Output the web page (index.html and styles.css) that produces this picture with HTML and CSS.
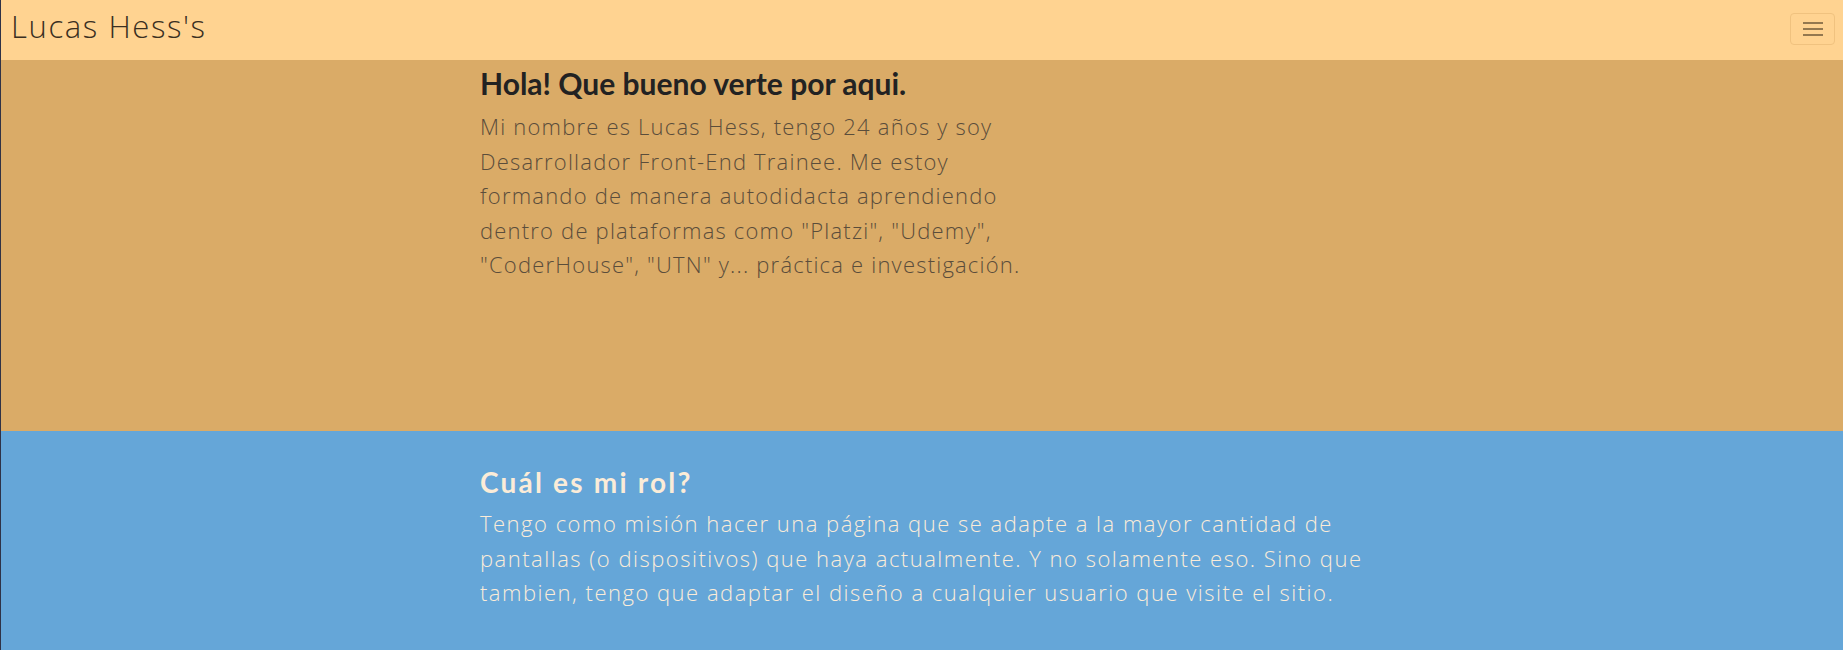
FILE: index.html
```html
<!DOCTYPE html>
<html lang="es">
<head>
<meta charset="utf-8">
<title>Lucas Hess's</title>
<link rel="stylesheet" href="styles.css">
</head>
<body>
<div class="page">
  <nav class="navbar">
    <a class="brand" href="#">Lucas Hess's</a>
    <button class="toggler" type="button" aria-label="Menu">
      <span class="bar"></span><span class="bar"></span><span class="bar"></span>
    </button>
  </nav>
  <section class="hero">
    <div class="content narrow">
      <h1 class="title dark">Hola! Que bueno verte por aqui.</h1>
      <p class="text brown">Mi nombre es Lucas Hess, tengo 24 años y soy Desarrollador Front-End Trainee. Me estoy formando de manera autodidacta aprendiendo dentro de plataformas como "Platzi", "Udemy", "CoderHouse", "UTN" y... práctica e investigación.</p>
    </div>
  </section>
  <section class="role">
    <div class="content wide">
      <h2 class="title light">Cuál es mi rol?</h2>
      <p class="text cream wide-text">Tengo como misión hacer una página que se adapte a la mayor cantidad de pantallas (o dispositivos) que haya actualmente. Y no solamente eso. Sino que tambien, tengo que adaptar el diseño a cualquier usuario que visite el sitio.</p>
    </div>
  </section>
</div>
</body>
</html>
```
FILE: styles.css
```css
* { box-sizing: border-box; }
html, body { margin: 0; padding: 0; }
body {
  background: #2f3246;
  font-family: "Open Sans", "Liberation Sans", sans-serif;
  overflow: hidden;
}
.page {
  margin-left: 1px;
  min-height: 650px;
  background: #65a6d8;
}
.navbar {
  height: 60px;
  background: #ffd391;
  display: flex;
  align-items: center;
  justify-content: space-between;
  padding: 0 8px 0 10px;
}
.brand {
  font-family: "Open Sans", "Liberation Sans", sans-serif;
  font-size: 31px;
  line-height: 1;
  margin-bottom: 8px;
  font-weight: 300;
  color: #3a2f22;
  text-decoration: none;
  letter-spacing: 1.6px;
}
.toggler {
  width: 45px;
  height: 32px;
  margin-top: -2px;
  border: 1px solid #f0c27f;
  border-radius: 4px;
  background: transparent;
  display: flex;
  flex-direction: column;
  align-items: center;
  justify-content: center;
  gap: 4px;
  padding: 0;
}
.bar {
  display: block;
  width: 20px;
  height: 2px;
  background: #94784f;
}
.hero {
  background: #daab67;
  height: 371px;
  padding-top: 6px;
}
.role {
  background: #65a6d8;
  padding-top: 34px;
}
.content {
  margin-left: 479px;
}
.narrow { width: 558px; }
.wide { width: 930px; }
.title {
  font-family: "Lato", "Liberation Sans", sans-serif;
  margin: 0 0 9px;
  font-weight: 700;
  font-size: 30px;
  line-height: 34px;
}
.dark { color: #222222; }
.light {
  color: #fbecd8;
  font-size: 28px;
  letter-spacing: 2.2px;
  margin-bottom: 7px;
}
.text {
  margin: 0;
  font-size: 22px;
  font-weight: 300;
  line-height: 34.6px;
  letter-spacing: 1.2px;
}
.wide-text { letter-spacing: 1.5px; }
.brown { color: #5a4d3b; }
.cream { color: #fbecd8; }
```
